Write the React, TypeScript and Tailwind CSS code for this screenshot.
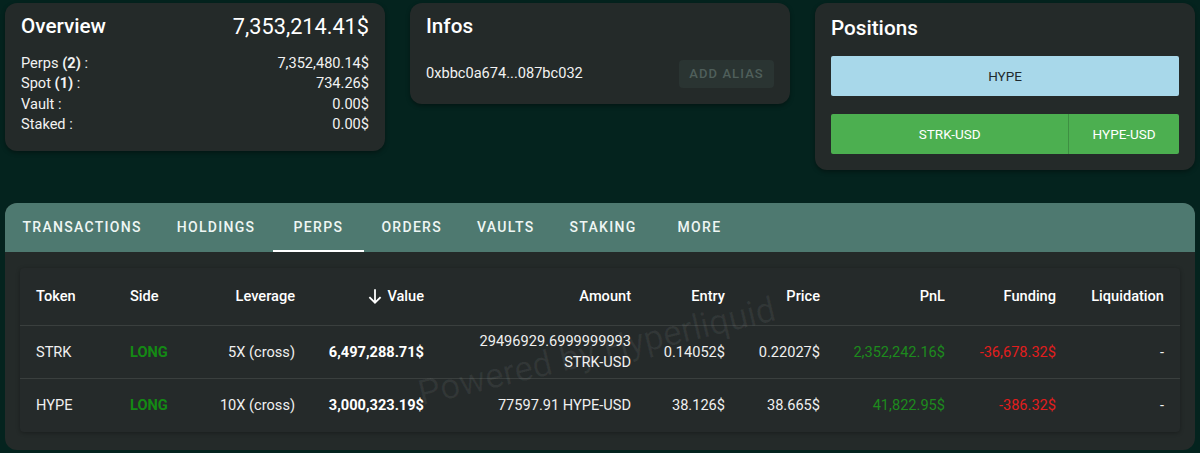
import React from "react";

const tabs = ["Transactions", "Holdings", "Perps", "Orders", "Vaults", "Staking", "More"];

const cols = "grid grid-cols-[94px_80px_117px_129px_207px_94px_95px_125px_111px_108px]";

interface Row {
  token: string;
  side: string;
  leverage: string;
  value: string;
  amount: string;
  entry: string;
  price: string;
  pnl: string;
  funding: string;
  liquidation: string;
}

const rows: Row[] = [
  {
    token: "STRK",
    side: "LONG",
    leverage: "5X (cross)",
    value: "6,497,288.71$",
    amount: "29496929.6999999993 STRK-USD",
    entry: "0.14052$",
    price: "0.22027$",
    pnl: "2,352,242.16$",
    funding: "-36,678.32$",
    liquidation: "-",
  },
  {
    token: "HYPE",
    side: "LONG",
    leverage: "10X (cross)",
    value: "3,000,323.19$",
    amount: "77597.91 HYPE-USD",
    entry: "38.126$",
    price: "38.665$",
    pnl: "41,822.95$",
    funding: "-386.32$",
    liquidation: "-",
  },
];

const Card = ({ children, className = "" }: { children: React.ReactNode; className?: string }) => (
  <div className={`rounded-[12px] bg-[#242a29] px-4 pt-3 pb-4 shadow-[0_2px_4px_rgba(0,0,0,0.35)] ${className}`}>{children}</div>
);

const Overview = () => {
  const lines: [React.ReactNode, string][] = [
    [<>Perps <b className="font-bold">(2)</b> :</>, "7,352,480.14$"],
    [<>Spot <b className="font-bold">(1)</b> :</>, "734.26$"],
    ["Vault :", "0.00$"],
    ["Staked :", "0.00$"],
  ];
  return (
    <Card className="pb-[17px]">
      <div className="flex items-center justify-between h-6">
        <h2 className="text-[20.7px] font-medium text-white">Overview</h2>
        <span className="text-[21.7px] text-white">7,353,214.41$</span>
      </div>
      <div className="mt-[14px] text-[14.6px] leading-[20.3px] text-[#f2f2f2]">
        {lines.map(([label, v], i) => (
          <div key={i} className="flex justify-between">
            <span>{label}</span>
            <span>{v}</span>
          </div>
        ))}
      </div>
    </Card>
  );
};

const Infos = () => (
  <Card>
    <h2 className="h-6 flex items-center text-[20.7px] font-medium text-white">Infos</h2>
    <div className="mt-[21px] flex items-center justify-between">
      <span className="text-[14.6px] text-[#f2f2f2]">0xbbc0a674...087bc032</span>
      <button className="h-7 w-[95px] rounded bg-[#2a3432] text-[13px] font-medium tracking-[1.1px] text-[#4f5f5b]">
        ADD ALIAS
      </button>
    </div>
  </Card>
);

const Positions = () => (
  <Card>
    <h2 className="h-7 flex items-center text-[20.7px] font-medium text-white">Positions</h2>
    <div className="mt-[13px] flex h-10 items-center justify-center rounded-[2px] bg-[#a8d8ea] text-[13.5px] text-[#1f2a2e]">
      HYPE
    </div>
    <div className="mt-[18px] flex h-10 text-[13.5px] text-white">
      <div className="flex flex-[238] items-center justify-center rounded-l-[2px] bg-[#4caf50] border-r border-[#3e8f42]">STRK-USD</div>
      <div className="flex flex-[110] items-center justify-center rounded-r-[2px] bg-[#4caf50]">HYPE-USD</div>
    </div>
  </Card>
);

export default function App() {
  return (
    <div className="min-h-screen bg-[#04231e] px-[5px] pt-[3px] font-['Roboto',sans-serif]">
      <div className="grid grid-cols-3 items-start gap-[25px]">
        <Overview />
        <Infos />
        <Positions />
      </div>

      <div className="mt-[33px] overflow-hidden rounded-[12px] bg-[#242a29]">
        <div className="flex h-[49px] bg-[#4e7970]">
          {tabs.map((t) => (
            <div
              key={t}
              className="relative flex min-w-[91px] items-center justify-center px-[17.5px] text-[14px] font-medium uppercase tracking-[1.3px] text-[#eef6f4]"
            >
              {t}
              {t === "Perps" && <span className="absolute inset-x-0 bottom-0 h-[2px] bg-white" />}
            </div>
          ))}
        </div>

        <div className="px-[15px] pt-4 pb-[18px]">
          <div className="relative overflow-hidden rounded bg-[#252a2a] shadow-[0_1px_4px_rgba(0,0,0,0.3)] text-[14.6px]">
            <div className={`${cols} h-[58px] items-center border-b border-[#3a3f3e] font-medium text-white`}>
              <div className="pl-4">Token</div>
              <div className="pl-4">Side</div>
              <div className="pr-4 text-right">Leverage</div>
              <div className="flex items-center justify-end gap-[3px] pr-4">
                <svg width="18" height="18" viewBox="0 0 24 24" fill="none" stroke="currentColor" strokeWidth="2.4">
                  <path d="M12 3v18M4.5 13.5 12 21l7.5-7.5" />
                </svg>
                Value
              </div>
              <div className="pr-4 text-right">Amount</div>
              <div className="pr-4 text-right">Entry</div>
              <div className="pr-4 text-right">Price</div>
              <div className="pr-4 text-right">PnL</div>
              <div className="pr-4 text-right">Funding</div>
              <div className="pr-4 text-right">Liquidation</div>
            </div>
            {rows.map((r, i) => (
              <div
                key={r.token}
                className={`${cols} h-[53px] items-center leading-[21px] text-[#f0f0f0] ${i === 0 ? "border-b border-[#3a3f3e]" : ""}`}
              >
                <div className="pl-4">{r.token}</div>
                <div className="pl-4 font-bold text-[#148a14]">{r.side}</div>
                <div className="pr-4 text-right">{r.leverage}</div>
                <div className="pr-4 text-right font-bold text-white">{r.value}</div>
                <div className="pr-4 pl-8 text-right">{r.amount}</div>
                <div className="pr-4 text-right">{r.entry}</div>
                <div className="pr-4 text-right">{r.price}</div>
                <div className="pr-4 text-right text-[#1d8a1d]">{r.pnl}</div>
                <div className="pr-4 text-right text-[#e21d1d]">{r.funding}</div>
                <div className="pr-4 text-right">{r.liquidation}</div>
              </div>
            ))}
            <div className="pointer-events-none absolute inset-0 flex items-center justify-center">
              <span className="ml-[-6px] mt-[4px] -rotate-[13.5deg] text-[35px] whitespace-nowrap text-white/[0.06]">
                Powered by Hyperliquid
              </span>
            </div>
          </div>
        </div>
      </div>
    </div>
  );
}
